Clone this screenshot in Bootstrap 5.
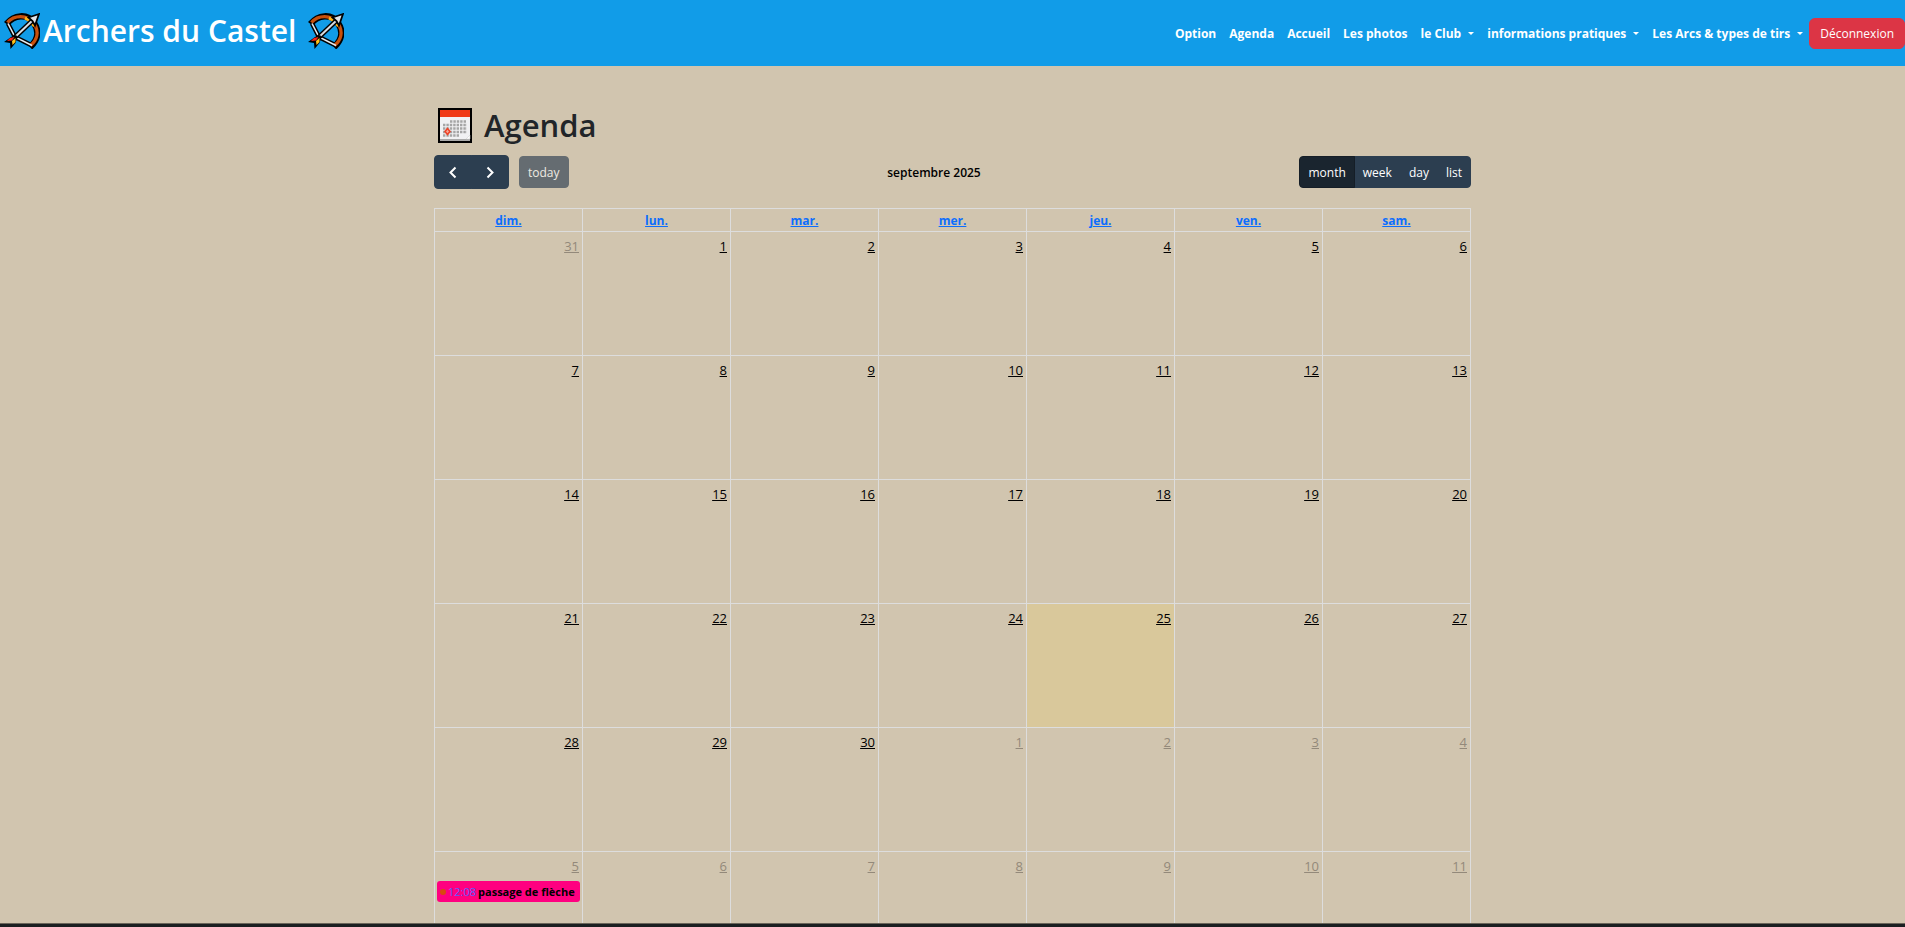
<!DOCTYPE html>
<html lang="fr">
<head>
<meta charset="utf-8">
<meta name="viewport" content="width=device-width, initial-scale=1">
<title>Archers du Castel - Agenda</title>
<link rel="stylesheet" href="https://cdn.jsdelivr.net/npm/bootstrap@5.3.0/dist/css/bootstrap.min.css">
<style>
  body { background: #d1c5af; font-family: "Open Sans", "Noto Sans", sans-serif; font-size: 13px; height: 100vh; overflow: hidden; }
  .site-nav { background: #119ce8; min-height: 66px; }
  .site-title { font-size: 30px; font-weight: 600; line-height: 36px; padding-top: 13px; }
  .site-title span { margin: 0 12px 0 3px; }
  .site-nav .navbar-nav .nav-link { color: #fff; font-size: 12px; font-weight: 700; line-height: 20px; padding: 7px 6px 5px 7px; white-space: nowrap; }
  .site-nav .dropdown-toggle::after { border-width: 3px; border-bottom: 0; margin-left: 7px; vertical-align: 3px; }
  .logout { font-size: 12px; line-height: 20px; padding: 5px 10px 4px; }
  .agenda { width: 100%; max-width: 1037px; }
  .agenda-title { font-size: 31px; font-weight: 600; line-height: 40px; margin: 15px 0 10px 4px; }
  .btn-cal { --bs-btn-color: #fff; --bs-btn-bg: #2c3e50; --bs-btn-border-color: #2c3e50;
    --bs-btn-hover-color: #fff; --bs-btn-hover-bg: #1e2b37; --bs-btn-hover-border-color: #1a252f;
    --bs-btn-active-color: #fff; --bs-btn-active-bg: #1a252f; --bs-btn-active-border-color: #151e27;
    --bs-btn-disabled-color: #fff; --bs-btn-disabled-bg: #2c3e50; --bs-btn-disabled-border-color: #2c3e50;
    --bs-btn-border-radius: 4px; font-size: 12px; line-height: 20px; padding: 6px 8px 4px; }
  .btn-step { padding: 6px 10px; width: 38px; height: 34px; }
  .toolbar-start { gap: 10px; }
  .month-name { font-size: 12px; font-weight: 600; line-height: 16px; padding-top: 2px; color: #000; }
  .month-grid { table-layout: fixed; border-collapse: collapse; width: 100%; margin-top: 19px; }
  .month-grid th, .month-grid td { border: 1px solid #ddd; }
  .month-grid th { height: 23px; padding: 2px 0 0; font-size: 12px; line-height: 20px; text-align: center; }
  .month-grid td { height: 124px; padding: 4px 3px 0; vertical-align: top; text-align: right; line-height: 20px; }
  .month-grid .day { color: #000; }
  .month-grid .other .day { color: #93897a; }
  .month-grid .today { background: #d9c89b; }
  .event { background: #ff0080; color: #000; border-radius: 3px; font-size: 11px; line-height: 21px; padding: 0 3px; margin: 5px -1px 0; gap: 2px; white-space: nowrap; overflow: hidden; }
  .event:hover { color: #000; }
  .event-dot { width: 6px; height: 6px; background: #d9480f; }
  .event-time { color: #5a5cff; }
  .bottom-edge { height: 4px; background: #1b1f21; border-top: 1px solid #6b655a; }
</style>
</head>
<body>
<svg class="d-none" aria-hidden="true">
  <symbol id="bow" viewBox="0 0 36 36">
    <path d="M2.500 11C10 2 23 0 30 10c6 9 3 18-4 24" fill="none" stroke="#000" stroke-width="6.500"/>
    <path d="M4 10.500L11 24l17 8.500" fill="none" stroke="#000" stroke-width="4.500"/>
    <path d="M3.500 9.500C10 2 23 1 30 10.500c5.500 8.500 3 16.500-3.500 22" fill="none" stroke="#c8500d" stroke-width="3.400"/>
    <path d="M21 5q5.500 2 9.500 8" fill="none" stroke="#ffb31a" stroke-width="3.400"/>
    <path d="M4 10.500L11 24l17 8.500" fill="none" stroke="#e4eaf0" stroke-width="1.600"/>
    <path d="M9 26L29 7" stroke="#000" stroke-width="5"/>
    <path d="M10 25L29 7" stroke="#d9dde2" stroke-width="2"/>
    <path d="M35 1L24.500 4.500l4 3.500 2.500 4.500z" fill="#dfe2e6" stroke="#000" stroke-width="1.800"/>
    <path d="M12 22l-5 2-7 5 6 1 .5 6 5-6 2-6z" fill="#000"/>
    <path d="M10.500 24l-4.500 1-3 3 5-.500z" fill="#f52316"/>
    <path d="M11.500 25l-3.500 3 .500 4 3-3z" fill="#ffc21a"/>
  </symbol>
</svg>

<nav class="site-nav navbar navbar-expand p-0 flex-nowrap align-items-stretch justify-content-between">
  <a href="#" class="site-title d-flex align-items-center align-self-start text-white text-decoration-none text-nowrap ms-1">
    <svg width="36" height="36" aria-hidden="true"><use href="#bow"/></svg>
    <span>Archers du Castel</span>
    <svg width="36" height="36" aria-hidden="true"><use href="#bow"/></svg>
  </a>
  <div class="d-flex align-items-center">
    <ul class="navbar-nav">
      <li class="nav-item"><a class="nav-link" href="#">Option</a></li>
      <li class="nav-item"><a class="nav-link" href="#">Agenda</a></li>
      <li class="nav-item"><a class="nav-link" href="#">Accueil</a></li>
      <li class="nav-item"><a class="nav-link" href="#">Les photos</a></li>
      <li class="nav-item"><a class="nav-link dropdown-toggle" href="#" role="button">le Club</a></li>
      <li class="nav-item"><a class="nav-link dropdown-toggle" href="#" role="button">informations pratiques</a></li>
      <li class="nav-item"><a class="nav-link dropdown-toggle" href="#" role="button">Les Arcs &amp; types de tirs</a></li>
    </ul>
    <button type="button" class="btn btn-danger logout">Déconnexion</button>
  </div>
</nav>

<main class="agenda mx-auto pt-4">
  <h1 class="agenda-title d-flex align-items-center">
    <svg class="me-2" width="34" height="35" viewBox="0 0 34 35" aria-hidden="true">
      <path d="M0 0h34v35H0z" fill="#000"/>
      <path d="M2 2h30v31H2z" fill="#f1f1f3"/>
      <path d="M2 2h30v7H2z" fill="#f03a17"/>
      <path d="M2 31h30v2H2z" fill="#aaa"/>
      <path d="M32 27v4h-4z" fill="#fff" stroke="#ccc" stroke-width=".5"/>
      <path d="M12 13.500h17M5 17h24M5 20.500h24M5 24h24M5 27.500h17" stroke="#a5a5a5" stroke-width="2.400" stroke-dasharray="2.400 1"/>
      <path d="M9.500 20.500l2.500 3-2.500 3-2.500-3z" fill="#f3a698" stroke="#ee4429" stroke-width="1.600"/>
    </svg>
    <span class="ms-1">Agenda</span>
  </h1>

  <div class="d-flex align-items-center justify-content-between">
    <div class="toolbar-start d-flex align-items-center">
      <div class="btn-group">
        <button type="button" class="btn btn-cal btn-step" aria-label="Mois précédent"><svg class="d-block mx-auto" width="8" height="20" viewBox="0 0 8 20" fill="none" stroke="#fff" stroke-width="2"><path d="M6.500 5.500L1.500 10.500l5 5"/></svg></button>
        <button type="button" class="btn btn-cal btn-step" aria-label="Mois suivant"><svg class="d-block mx-auto" width="8" height="20" viewBox="0 0 8 20" fill="none" stroke="#fff" stroke-width="2"><path d="M1.500 5.500l5 5-5 5"/></svg></button>
      </div>
      <button type="button" class="btn btn-cal" disabled>today</button>
    </div>
    <h2 class="month-name m-0">septembre 2025</h2>
    <div class="btn-group">
      <button type="button" class="btn btn-cal active">month</button>
      <button type="button" class="btn btn-cal">week</button>
      <button type="button" class="btn btn-cal">day</button>
      <button type="button" class="btn btn-cal">list</button>
    </div>
  </div>

  <table class="month-grid">
    <thead>
      <tr><th><a href="#">dim.</a></th><th><a href="#">lun.</a></th><th><a href="#">mar.</a></th><th><a href="#">mer.</a></th><th><a href="#">jeu.</a></th><th><a href="#">ven.</a></th><th><a href="#">sam.</a></th></tr>
    </thead>
    <tbody>
      <tr><td class="other"><a class="day" href="#">31</a></td><td><a class="day" href="#">1</a></td><td><a class="day" href="#">2</a></td><td><a class="day" href="#">3</a></td><td><a class="day" href="#">4</a></td><td><a class="day" href="#">5</a></td><td><a class="day" href="#">6</a></td></tr>
      <tr><td><a class="day" href="#">7</a></td><td><a class="day" href="#">8</a></td><td><a class="day" href="#">9</a></td><td><a class="day" href="#">10</a></td><td><a class="day" href="#">11</a></td><td><a class="day" href="#">12</a></td><td><a class="day" href="#">13</a></td></tr>
      <tr><td><a class="day" href="#">14</a></td><td><a class="day" href="#">15</a></td><td><a class="day" href="#">16</a></td><td><a class="day" href="#">17</a></td><td><a class="day" href="#">18</a></td><td><a class="day" href="#">19</a></td><td><a class="day" href="#">20</a></td></tr>
      <tr><td><a class="day" href="#">21</a></td><td><a class="day" href="#">22</a></td><td><a class="day" href="#">23</a></td><td><a class="day" href="#">24</a></td><td class="today"><a class="day" href="#">25</a></td><td><a class="day" href="#">26</a></td><td><a class="day" href="#">27</a></td></tr>
      <tr><td><a class="day" href="#">28</a></td><td><a class="day" href="#">29</a></td><td><a class="day" href="#">30</a></td><td class="other"><a class="day" href="#">1</a></td><td class="other"><a class="day" href="#">2</a></td><td class="other"><a class="day" href="#">3</a></td><td class="other"><a class="day" href="#">4</a></td></tr>
      <tr>
        <td class="other"><a class="day" href="#">5</a>
          <a href="#" class="event d-flex align-items-center text-decoration-none"><span class="event-dot rounded-circle flex-shrink-0"></span><span class="event-time">12:08</span><strong>passage de flèche</strong></a>
        </td>
        <td class="other"><a class="day" href="#">6</a></td><td class="other"><a class="day" href="#">7</a></td><td class="other"><a class="day" href="#">8</a></td><td class="other"><a class="day" href="#">9</a></td><td class="other"><a class="day" href="#">10</a></td><td class="other"><a class="day" href="#">11</a></td>
      </tr>
    </tbody>
  </table>
</main>
<div class="bottom-edge fixed-bottom"></div>
<script src="https://cdn.jsdelivr.net/npm/bootstrap@5.3.0/dist/js/bootstrap.bundle.min.js"></script>
</body>
</html>
